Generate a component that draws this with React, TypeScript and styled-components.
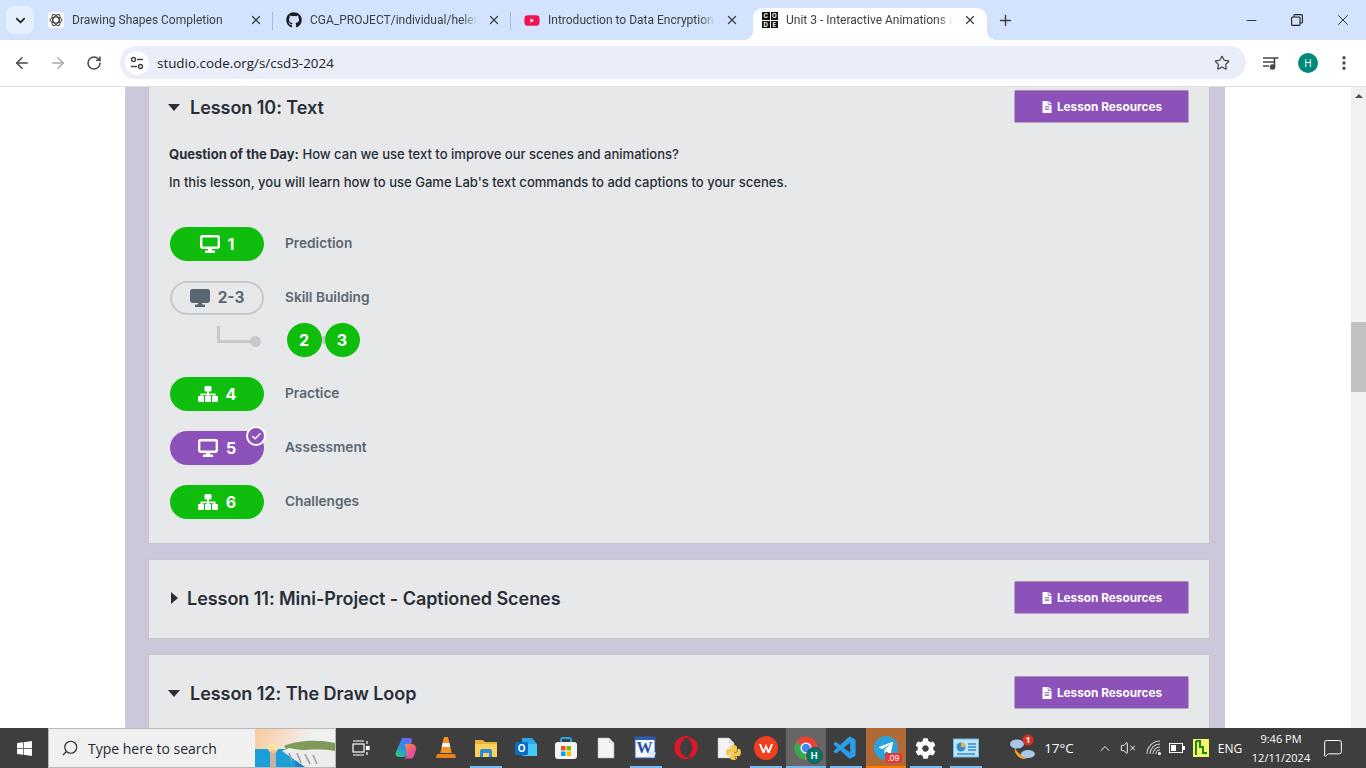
import React from "react";
import styled, { createGlobalStyle } from "styled-components";
import { ArrowLeft, ArrowRight, RotateCw, X, Plus, Minus, Star, ChevronDown, ChevronUp, Search, EllipsisVertical, Check, VolumeX, MessageSquare } from "lucide-react";
import { FaFileAlt, FaGithub, FaYoutube, FaWindows, FaOpera, FaCog, FaTelegramPlane, FaPython } from "react-icons/fa";
import { VscVscode } from "react-icons/vsc";

const GlobalStyle = createGlobalStyle`
  html, body { margin: 0; padding: 0; height: 100%; overflow: hidden; }
  #root { height: 100%; }
  * { box-sizing: border-box; }
  body { font-family: "Inter", "Liberation Sans", sans-serif; }
`;

const Screen = styled.div`
  width: 1366px;
  height: 768px;
  display: flex;
  flex-direction: column;
  overflow: hidden;
  background: #fff;
`;

/* browser chrome */
const TabStrip = styled.div`
  height: 40px;
  background: #d3e3fd;
  display: flex;
  align-items: flex-end;
  padding-left: 6px;
  flex-shrink: 0;
`;

const TabMenu = styled.div`
  width: 28px;
  height: 28px;
  margin: 0 1px 6px 0;
  border-radius: 8px;
  background: #e6effd;
  display: flex;
  align-items: center;
  justify-content: center;
  color: #1f1f1f;
`;

const Tab = styled.div<{ $sep?: boolean }>`
  position: relative;
  width: 238px;
  height: 32px;
  padding: 0 0 8px 13px;
  display: flex;
  align-items: center;
  ${(p) =>
    p.$sep &&
    `&::after {
      content: "";
      position: absolute;
      right: 0;
      top: 4px;
      height: 18px;
      width: 1px;
      background: #a3bbe0;
    }`}
`;

const ActiveTab = styled(Tab)`
  width: 234px;
  margin-left: 4px;
  padding-left: 9px;
  background: #fff;
  border-radius: 10px 10px 0 0;
  &::before,
  &::after {
    content: "";
    position: absolute;
    bottom: 0;
    width: 10px;
    height: 10px;
  }
  &::before {
    left: -10px;
    background: radial-gradient(circle at 0 0, transparent 10px, #fff 10.5px);
  }
  &::after {
    right: -10px;
    background: radial-gradient(circle at 100% 0, transparent 10px, #fff 10.5px);
  }
`;

const TabIcon = styled.div`
  width: 16px;
  height: 16px;
  flex-shrink: 0;
  display: flex;
  align-items: center;
  justify-content: center;
`;

const TabTitle = styled.div`
  margin-left: 8px;
  width: 167px;
  white-space: nowrap;
  overflow: hidden;
  font-family: "Roboto", sans-serif;
  font-size: 12px;
  color: #3c4043;
  -webkit-mask-image: linear-gradient(90deg, #000 91%, transparent);
  mask-image: linear-gradient(90deg, #000 91%, transparent);
`;

const TabClose = styled.div`
  margin-left: 10px;
  display: flex;
  color: #3c4043;
`;

const NewTab = styled.div`
  margin: 0 0 6px 10px;
  height: 28px;
  display: flex;
  align-items: center;
  color: #3c4043;
`;

const WindowButtons = styled.div`
  margin-left: auto;
  display: flex;
  align-self: flex-start;
`;

const WindowButton = styled.div`
  width: 46px;
  height: 40px;
  display: flex;
  align-items: center;
  justify-content: center;
  color: #1f1f1f;
`;

const Toolbar = styled.div`
  height: 47px;
  background: #fff;
  border-bottom: 1px solid #e0e0e0;
  display: flex;
  align-items: center;
  flex-shrink: 0;
  padding: 0 0 1px 4px;
`;

const NavButton = styled.div<{ $off?: boolean }>`
  width: 36px;
  display: flex;
  justify-content: center;
  color: ${(p) => (p.$off ? "#a8abaf" : "#474747")};
`;

const AddressBar = styled.div`
  width: 1126px;
  height: 33px;
  margin-left: 8px;
  border-radius: 17px;
  background: #e9eef8;
  display: flex;
  align-items: center;
  padding: 0 16px 0 5px;
`;

const SiteBadge = styled.div`
  width: 24px;
  height: 24px;
  border-radius: 50%;
  background: #fff;
  display: flex;
  align-items: center;
  justify-content: center;
`;

const Url = styled.div`
  margin-left: 8px;
  flex: 1;
  font-family: "Open Sans", sans-serif;
  font-size: 13.4px;
  color: #202124;
`;

const ToolbarRight = styled.div`
  width: 120px;
  display: flex;
  align-items: center;
  color: #474747;
  padding-left: 16px;
`;

const Avatar = styled.div`
  width: 20px;
  height: 20px;
  margin-left: 18px;
  border-radius: 50%;
  background: #00897b;
  color: #fff;
  font-family: "Open Sans", sans-serif;
  font-size: 10px;
  display: flex;
  align-items: center;
  justify-content: center;
`;

const OverflowDots = styled.div`
  margin-left: 17px;
  display: flex;
`;

const CodeLogo = styled.div`
  width: 16px;
  height: 16px;
  display: grid;
  grid-template-columns: 1fr 1fr;
  gap: 1px;
`;

const CodeLetter = styled.div`
  background: #111;
  color: #fff;
  font-size: 6px;
  line-height: 7.5px;
  font-weight: 700;
  text-align: center;
`;

/* page */
const Viewport = styled.div`
  flex: 1;
  min-height: 0;
  display: flex;
`;

const PageArea = styled.div`
  flex: 1;
  min-width: 0;
  overflow: hidden;
  padding-left: 125px;
`;

const Column = styled.div`
  width: 1100px;
  min-height: 100%;
  background: #cdc7dc;
  padding: 0 15px 0 23px;
  display: flex;
  flex-direction: column;
  gap: 15px;
`;

const Card = styled.section<{ $cut?: boolean }>`
  background: #e7e8ea;
  border: 1px solid #c5c6c9;
  border-top: ${(p) => (p.$cut ? "none" : "1px solid #c5c6c9")};
  padding: ${(p) => (p.$cut ? "3px 20px 24px 20px" : "21px 20px 24px 20px")};
`;

const CardHead = styled.div`
  display: flex;
  align-items: center;
  justify-content: space-between;
`;

const CardTitle = styled.h2<{ $open?: boolean }>`
  margin: 0;
  padding-top: 1px;
  display: flex;
  align-items: center;
  gap: ${(p) => (p.$open ? "10px" : "9px")};
  font-size: 18px;
  font-weight: 600;
  color: #292f36;
  letter-spacing: -0.05px;
`;

const OpenCaret = styled.span`
  width: 0;
  height: 0;
  margin-left: -1px;
  border-left: 6px solid transparent;
  border-right: 6px solid transparent;
  border-top: 7px solid #292f36;
`;

const ClosedCaret = styled.span`
  width: 0;
  height: 0;
  margin-left: 2px;
  border-top: 6px solid transparent;
  border-bottom: 6px solid transparent;
  border-left: 7px solid #292f36;
`;

const ResourceButton = styled.div`
  width: 175px;
  height: 33px;
  background: #8c52ba;
  border: 1px solid #b3a6bf;
  border-top-color: #a094aa;
  border-radius: 2px;
  color: #fff;
  font-size: 11.8px;
  font-weight: 700;
  display: flex;
  align-items: center;
  justify-content: center;
  gap: 4px;
`;

const Paragraph = styled.p`
  margin: 0 0 14px;
  font-size: 13.05px;
  line-height: 14px;
  font-weight: 500;
  color: #292f36;
  b { font-weight: 700; }
`;

const Intro = styled.div`
  margin-top: 24px;
`;

const LevelList = styled.div`
  margin: 38px 0 0 1px;
  display: flex;
  flex-direction: column;
  gap: 20px;
`;

const LevelRow = styled.div`
  display: flex;
  align-items: center;
  gap: 21px;
`;

const Pill = styled.div<{ $variant: "green" | "purple" | "outline" }>`
  position: relative;
  width: 94px;
  height: 34px;
  padding-bottom: 1px;
  border-radius: 17px;
  display: flex;
  align-items: center;
  justify-content: center;
  gap: 8px;
  font-size: ${(p) => (p.$variant === "outline" ? "15.4px" : "16px")};
  font-weight: 700;
  color: ${(p) => (p.$variant === "outline" ? "#5b6770" : "#fff")};
  background: ${(p) =>
    p.$variant === "green" ? "#0fbe0c" : p.$variant === "purple" ? "#8c52ba" : "transparent"};
  border: ${(p) => (p.$variant === "outline" ? "2px solid #c6cace" : "none")};
`;

const DoneBadge = styled.div`
  position: absolute;
  top: -5px;
  right: -2px;
  width: 20px;
  height: 20px;
  border-radius: 50%;
  background: #8c52ba;
  border: 2px solid #fff;
  display: flex;
  align-items: center;
  justify-content: center;
`;

const LevelLabel = styled.div`
  padding-bottom: 2px;
  font-size: 13.7px;
  font-weight: 600;
  color: #5b6770;
`;

const SubGroup = styled.div`
  display: flex;
  flex-direction: column;
  gap: 8px;
`;

const SubRow = styled.div`
  display: flex;
  align-items: center;
  height: 34px;
  margin-left: 47px;
`;

const Connector = styled.div`
  position: relative;
  width: 40px;
  height: 17px;
  margin: -12px 30px 0 0;
  border-left: 3px solid #c6cace;
  border-bottom: 3px solid #c6cace;
  &::after {
    content: "";
    position: absolute;
    right: -4px;
    bottom: -7px;
    width: 11px;
    height: 11px;
    border-radius: 50%;
    background: #c6cace;
  }
`;

const Bubbles = styled.div`
  display: flex;
  align-items: center;
`;

const Bubble = styled.div`
  width: 35px;
  height: 34px;
  padding: 0 1px 1px 0;
  border-radius: 50%;
  background: #0fbe0c;
  color: #fff;
  font-size: 16px;
  font-weight: 700;
  display: flex;
  align-items: center;
  justify-content: center;
`;

const BubbleLink = styled.div`
  width: 3px;
  height: 8px;
  background: #c6cace;
`;

const Scrollbar = styled.div`
  width: 15px;
  background: #f1f1f1;
  display: flex;
  flex-direction: column;
  align-items: center;
  padding-top: 7px;
`;

const ScrollArrow = styled.div`
  width: 0;
  height: 0;
  border-left: 4px solid transparent;
  border-right: 4px solid transparent;
  border-bottom: 4px solid #505050;
`;

const ScrollThumb = styled.div`
  width: 15px;
  height: 70px;
  margin-top: 224px;
  background: #c1c1c1;
`;

/* windows taskbar */
const Taskbar = styled.div`
  height: 40px;
  flex-shrink: 0;
  background: #3e3e3e;
  display: flex;
  align-items: stretch;
`;

const StartButton = styled.div`
  width: 48px;
  display: flex;
  align-items: center;
  justify-content: center;
  color: #fff;
`;

const SearchBox = styled.div`
  position: relative;
  width: 288px;
  margin-right: 5px;
  background: #f0f0f0;
  border: 1px solid #b8b8b8;
  display: flex;
  align-items: center;
  padding-left: 12px;
  gap: 9px;
  font-family: "Open Sans", sans-serif;
  font-size: 14px;
  color: #1f2a33;
  overflow: hidden;
`;

const SearchGlass = styled.span`
  display: flex;
  transform: scaleX(-1);
`;

const SearchArt = styled.svg`
  position: absolute;
  right: 0;
  top: 0;
`;

const Slot = styled.div<{ $state?: "open" | "active" | "alert" }>`
  position: relative;
  width: 40px;
  display: flex;
  align-items: center;
  justify-content: center;
  color: #fff;
  background: ${(p) =>
    p.$state === "active" ? "#666" : p.$state === "alert" ? "#b06a35" : "transparent"};
  &:first-child {
    margin-right: 4.5px;
  }
  ${(p) =>
    p.$state &&
    `&::after {
      content: "";
      position: absolute;
      bottom: 0;
      height: 2px;
      left: ${p.$state === "open" ? "4px" : "0"};
      right: ${p.$state === "open" ? "4px" : "0"};
      background: ${p.$state === "alert" ? "#ff7a00" : "#76b9ed"};
    }`}
`;

const Tray = styled.div`
  margin-left: auto;
  padding-right: 15px;
  display: flex;
  align-items: center;
  color: #fff;
  font-family: "Open Sans", sans-serif;
  font-size: 13.5px;
`;

const TrayItem = styled.div<{ $w: number; $ml?: number }>`
  width: ${(p) => p.$w}px;
  margin-left: ${(p) => p.$ml ?? 0}px;
  display: flex;
  align-items: center;
  justify-content: center;
`;

const LangItem = styled(TrayItem)`
  font-size: 12px;
`;

const Clock = styled.div`
  width: 68px;
  text-align: center;
  font-size: 11px;
  line-height: 19px;
`;

const RedBadge = styled.span`
  position: absolute;
  right: -4px;
  bottom: -3px;
  background: #e53935;
  color: #fff;
  font-size: 8px;
  line-height: 10px;
  padding: 0 2px;
  border-radius: 2px;
`;

const IconWrap = styled.div`
  position: relative;
  display: flex;
`;

const ProfileDot = styled.span`
  position: absolute;
  right: -5px;
  bottom: -4px;
  width: 17px;
  height: 17px;
  border-radius: 50%;
  background: #00796b;
  border: 1px solid #444;
  color: #fff;
  font-size: 9px;
  font-weight: 700;
  display: flex;
  align-items: center;
  justify-content: center;
`;

const PyOverlay = styled.span`
  position: absolute;
  right: -7px;
  bottom: -2px;
  display: flex;
`;

const TelegramDisc = styled.div`
  width: 24px;
  height: 24px;
  border-radius: 50%;
  background: #2aa3dc;
  display: flex;
  align-items: center;
  justify-content: center;
`;

const TaskSlots = styled.div`
  display: flex;
`;

/* small drawings */
const GptIcon = () => (
  <svg width="16" height="16" viewBox="0 0 16 16">
    <rect width="16" height="16" rx="3" fill="#fff" />
    {[0, 60, 120].map((a) => (
      <ellipse key={a} cx="8" cy="8" rx="6" ry="3" fill="none" stroke="#333" strokeWidth="1" transform={`rotate(${a} 8 8)`} />
    ))}
  </svg>
);

const TuneIcon = () => (
  <svg width="14" height="14" viewBox="0 0 14 14" fill="none" stroke="#3c4043" strokeWidth="1.4">
    <circle cx="3.5" cy="3.5" r="2" />
    <path d="M7 3.5h6" />
    <circle cx="10.5" cy="10.5" r="2" />
    <path d="M1 10.5h6" />
  </svg>
);

const QueueIcon = () => (
  <svg width="18" height="16" viewBox="0 0 18 16" fill="none" stroke="#474747" strokeWidth="1.6">
    <path d="M1 3h11M1 7h11M1 11h6" />
    <path d="M12.5 12V3h4" />
    <circle cx="10.5" cy="12" r="2" fill="#474747" />
  </svg>
);

const RestoreIcon = () => (
  <svg width="12" height="12" viewBox="0 0 12 12" fill="none" stroke="#1f1f1f" strokeWidth="1.1">
    <rect x="0.6" y="3" width="8.400" height="8.400" rx="1" />
    <path d="M3 3V1.600a1 1 0 0 1 1-1h6.400a1 1 0 0 1 1 1V8a1 1 0 0 1-1 1H9" />
  </svg>
);

const DeskIcon = ({ solid }: { solid?: boolean }) => (
  <svg width="20" height="18" viewBox="0 0 20 18">
    <rect x="1.200" y="1.200" width="17.600" height="11.600" rx="1.200" fill={solid ? "currentColor" : "none"} stroke="currentColor" strokeWidth="2.400" />
    <path d="M8 14h4v2H8z M5 15.500h10V18H5z" fill="currentColor" />
  </svg>
);

const SitemapIcon = () => (
  <svg width="20" height="16" viewBox="0 0 20 16" fill="currentColor">
    <rect x="6.500" y="0" width="7" height="5.500" rx="1" />
    <rect x="0" y="10" width="6" height="6" rx="1" />
    <rect x="7" y="10" width="6" height="6" rx="1" />
    <rect x="14" y="10" width="6" height="6" rx="1" />
    <path d="M9 5h2v2.500h6.500V10h-2V9.200h-4.500V10H9V9.200H4.500V10h-2V7.500H9z" />
  </svg>
);

const TaskViewIcon = () => (
  <svg width="18" height="18" viewBox="0 0 18 18" fill="none" stroke="#fff" strokeWidth="1.200">
    <rect x="1" y="5" width="11" height="8" />
    <path d="M1 2h11M1 16h11M15 2v3M15 13v3" />
    <rect x="14.500" y="7.500" width="2.500" height="3" fill="#fff" />
  </svg>
);

const WifiIcon = () => (
  <svg width="16" height="16" viewBox="0 0 16 16" fill="none" stroke="#cfcfcf" strokeWidth="1.100">
    <path d="M1 14A13 13 0 0 1 14 1M4 14A10 10 0 0 1 14 4M7 14a7 7 0 0 1 7-7M10 14a4 4 0 0 1 4-4" />
    <circle cx="13.500" cy="13.500" r="1.500" fill="#fff" stroke="none" />
  </svg>
);

const BatteryIcon = () => (
  <svg width="16" height="10" viewBox="0 0 16 10">
    <rect x="0.500" y="0.500" width="13" height="9" fill="none" stroke="#fff" />
    <rect x="2" y="2" width="5" height="6" fill="#fff" />
    <rect x="14" y="3" width="2" height="4" fill="#fff" />
  </svg>
);

const CopilotIcon = () => (
  <svg width="24" height="24" viewBox="0 0 24 24">
    <defs>
      <linearGradient id="cpA" x1="0" y1="1" x2="1" y2="0">
        <stop offset="0" stopColor="#2fd36b" />
        <stop offset="0.5" stopColor="#2a8cf0" />
        <stop offset="1" stopColor="#8a5cf0" />
      </linearGradient>
      <linearGradient id="cpB" x1="0" y1="0" x2="1" y2="1">
        <stop offset="0" stopColor="#f0a020" />
        <stop offset="0.6" stopColor="#f0508a" />
        <stop offset="1" stopColor="#c050e0" />
      </linearGradient>
    </defs>
    <path d="M8 2h7c2 0 3 1 3 3l-4 13c-.6 2-2 3-4 3H5c-3 0-4-3-3-5z" fill="url(#cpA)" />
    <path d="M11 8h7c3 0 5 3 4 6l-2 6c-.6 2-2 2.500-4 2.500h-7c2 0 3-1 4-3z" fill="url(#cpB)" />
  </svg>
);

const VlcIcon = () => (
  <svg width="22" height="24" viewBox="0 0 22 24">
    <path d="M9 1h4l1.500 6h-7z" fill="#f7931e" />
    <path d="M7.500 7h7l.8 4H6.700z" fill="#f4f4f4" />
    <path d="M6.700 11h8.600l1.500 6H5.200z" fill="#f7931e" />
    <path d="M2 18h18l1 4H1z" fill="#e8801a" />
  </svg>
);

const FolderIcon = () => (
  <svg width="24" height="22" viewBox="0 0 24 22">
    <path d="M1 3h8l2 2h12v3H1z" fill="#e8b33c" />
    <path d="M1 7h22v13H1z" fill="#fbd25c" />
    <path d="M6 20v-6a2 2 0 0 1 2-2h8a2 2 0 0 1 2 2v6h-3v-4H9v4z" fill="#2a8fd8" />
  </svg>
);

const OutlookIcon = () => (
  <svg width="24" height="24" viewBox="0 0 24 24">
    <path d="M8 2h10l5 6v12H8z" fill="#28a8ea" />
    <path d="M12 8h11v12H12z" fill="#50d9ff" opacity=".7" />
    <rect x="1" y="6" width="13" height="13" rx="1.500" fill="#0a6cc4" />
    <text x="7.500" y="16" fontSize="10" fontWeight="700" fill="#fff" textAnchor="middle">O</text>
  </svg>
);

const StoreIcon = () => (
  <svg width="24" height="24" viewBox="0 0 24 24">
    <path d="M7 7V4a2 2 0 0 1 2-2h6a2 2 0 0 1 2 2v3" fill="none" stroke="#2aa5e0" strokeWidth="2" />
    <rect x="1" y="6" width="22" height="17" rx="3" fill="#f4f4f4" />
    <rect x="7" y="10" width="4.500" height="4.500" fill="#f25022" />
    <rect x="12.500" y="10" width="4.500" height="4.500" fill="#7fba00" />
    <rect x="7" y="15.500" width="4.500" height="4.500" fill="#00a4ef" />
    <rect x="12.500" y="15.500" width="4.500" height="4.500" fill="#ffb900" />
  </svg>
);

const BlankFileIcon = () => (
  <svg width="18" height="22" viewBox="0 0 18 22">
    <path d="M1 1h11l5 5v15H1z" fill="#f4f4f4" stroke="#aaa" strokeWidth=".6" />
    <path d="M12 1v5h5" fill="#ddd" />
  </svg>
);

const WordIcon = () => (
  <svg width="24" height="24" viewBox="0 0 24 24">
    <rect x="1" y="1" width="20" height="21" fill="#f5f7fb" stroke="#2b5eb0" />
    <rect x="1" y="1" width="20" height="3" fill="#2b5eb0" />
    <text x="10.500" y="17" fontSize="16" fontWeight="700" fontFamily="Liberation Serif, serif" fill="#1e4fa6" textAnchor="middle">W</text>
    <path d="M17 14l5 3-3 5-5-2z" fill="#dfe7f5" />
  </svg>
);

const WpsIcon = () => (
  <svg width="24" height="24" viewBox="0 0 24 24">
    <circle cx="12" cy="12" r="12" fill="#f0401e" />
    <path d="M5 8l3.500 9h2L12 12l1.500 5h2L19 8h-2l-2.500 6L12 8l-2.500 6L7 8z" fill="#fff" />
  </svg>
);

const PyFileIcon = () => (
  <IconWrap>
    <BlankFileIcon />
    <PyOverlay>
      <FaPython size={17} color="#f2c94c" />
    </PyOverlay>
  </IconWrap>
);

const ChromeIcon = () => (
  <svg width="24" height="24" viewBox="0 0 24 24">
    <circle cx="12" cy="12" r="11.500" fill="#ea4335" />
    <path d="M12 12L2 18A11.500 11.500 0 0 1 2 6z" fill="#34a853" />
    <path d="M12 12L2 18a11.500 11.500 0 0 0 10 5.500A11.500 11.500 0 0 0 22 18z" fill="#34a853" />
    <path d="M12 12h11.500a11.500 11.500 0 0 1-12 11.500z" fill="#fbbc04" />
    <circle cx="12" cy="12" r="5.500" fill="#fff" />
    <circle cx="12" cy="12" r="4.300" fill="#4285f4" />
  </svg>
);

const ControlPanelIcon = () => (
  <svg width="26" height="20" viewBox="0 0 26 20">
    <rect x="0.500" y="1" width="25" height="18" fill="#bfe3f7" stroke="#6fb6e0" />
    <circle cx="8" cy="9" r="4.500" fill="#2d8fd5" />
    <path d="M8 9V4.500A4.500 4.500 0 0 1 12.500 9z" fill="#f2b233" />
    <path d="M15 6h8M15 9h8M15 12h8M4 16h18" stroke="#2d8fd5" strokeWidth="1.400" />
  </svg>
);

const WeatherIcon = () => (
  <svg width="28" height="28" viewBox="0 0 28 28">
    <path d="M6 12a10 10 0 0 0 15 11c-5 2-13 1-15-11z" fill="#f59a23" />
    <path d="M6 14c2 5 7 8 13 8l-4 3c-5 0-9-5-9-11z" fill="#f59a23" />
    <ellipse cx="8" cy="10" rx="7" ry="4.500" fill="#a8c8ea" />
    <ellipse cx="19" cy="20" rx="7" ry="4" fill="#a8c8ea" />
    <circle cx="19" cy="6" r="5.500" fill="#d93025" />
    <text x="19" y="9" fontSize="8" fontWeight="700" fill="#fff" textAnchor="middle">1</text>
  </svg>
);

const StairIcon = () => (
  <svg width="16" height="18" viewBox="0 0 16 18">
    <rect width="16" height="18" fill="#f5f56a" />
    <path d="M3 2h4v6h3v6h4M3 2v14" fill="none" stroke="#158a15" strokeWidth="2" />
  </svg>
);

const Landscape = () => (
  <SearchArt width="80" height="38" viewBox="0 0 80 38">
    <defs>
      <linearGradient id="sky" x1="0" y1="0" x2="1" y2="0.300">
        <stop offset="0" stopColor="#f9c79a" />
        <stop offset="0.700" stopColor="#f0f0f0" />
      </linearGradient>
    </defs>
    <rect width="80" height="38" fill="url(#sky)" />
    <path d="M0 20h40v18H0z" fill="#1c9fd8" />
    <path d="M40 30h20v8H40z" fill="#1c7fd0" />
    <circle cx="18" cy="19" r="5" fill="#ffe39a" />
    <rect x="15" y="21" width="6" height="17" fill="#f5b59a" opacity=".8" />
    <path d="M29 17c12-5 32-7 51-3v8c-18-3-36-1-46 2z" fill="#7f9a5a" />
    <path d="M27 22l7-3c14 3 30 3 46 3v16H50z" fill="#ececec" />
    <path d="M34 24l3 8M42 24l4 10M50 25l5 10M58 26l4 9" stroke="#9a9a9a" strokeWidth="1.500" />
  </SearchArt>
);

const levels = [
  { kind: "green", icon: "desk", num: "1", label: "Prediction" },
  { kind: "outline", icon: "desk", num: "2-3", label: "Skill Building", bubbles: ["2", "3"] },
  { kind: "green", icon: "map", num: "4", label: "Practice" },
  { kind: "purple", icon: "desk", num: "5", label: "Assessment", done: true },
  { kind: "green", icon: "map", num: "6", label: "Challenges" },
] as const;

const tabs = [
  { title: "Drawing Shapes Completion", icon: <GptIcon />, sep: true },
  { title: "CGA_PROJECT/individual/helen/", icon: <FaGithub size={16} color="#1b1f23" />, sep: true },
  { title: "Introduction to Data Encryption", icon: <FaYoutube size={17} color="#f0134d" />, sep: false },
];

const ResourcesBtn = () => (
  <ResourceButton>
    <FaFileAlt size={12} />
    Lesson Resources
  </ResourceButton>
);

const slots: { icon: React.ReactNode; state?: "open" | "active" | "alert" }[] = [
  { icon: <TaskViewIcon /> },
  { icon: <CopilotIcon /> },
  { icon: <VlcIcon /> },
  { icon: <FolderIcon />, state: "open" },
  { icon: <OutlookIcon /> },
  { icon: <StoreIcon /> },
  { icon: <BlankFileIcon /> },
  { icon: <WordIcon />, state: "open" },
  { icon: <FaOpera size={24} color="#e0162b" /> },
  { icon: <PyFileIcon /> },
  { icon: <WpsIcon />, state: "open" },
  { icon: <IconWrap><ChromeIcon /><ProfileDot>H</ProfileDot></IconWrap>, state: "active" },
  { icon: <VscVscode size={27} color="#2a9fe8" />, state: "open" },
  {
    icon: (
      <IconWrap>
        <TelegramDisc><FaTelegramPlane size={16} color="#fff" /></TelegramDisc>
        <RedBadge>.09</RedBadge>
      </IconWrap>
    ),
    state: "alert",
  },
  { icon: <FaCog size={21} />, state: "open" },
  { icon: <ControlPanelIcon />, state: "open" },
];

export default function App() {
  return (
    <Screen>
      <GlobalStyle />
      <TabStrip>
        <TabMenu><ChevronDown size={15} strokeWidth={2.6} /></TabMenu>
        {tabs.map((t) => (
          <Tab key={t.title} $sep={t.sep}>
            <TabIcon>{t.icon}</TabIcon>
            <TabTitle>{t.title}</TabTitle>
            <TabClose><X size={14} strokeWidth={2.2} /></TabClose>
          </Tab>
        ))}
        <ActiveTab>
          <TabIcon>
            <CodeLogo>{["C", "O", "D", "E"].map((c) => <CodeLetter key={c}>{c}</CodeLetter>)}</CodeLogo>
          </TabIcon>
          <TabTitle>Unit 3 - Interactive Animations a</TabTitle>
          <TabClose><X size={14} strokeWidth={2.2} /></TabClose>
        </ActiveTab>
        <NewTab><Plus size={17} strokeWidth={2} /></NewTab>
        <WindowButtons>
          <WindowButton><Minus size={15} strokeWidth={1.4} /></WindowButton>
          <WindowButton><RestoreIcon /></WindowButton>
          <WindowButton><X size={18} strokeWidth={1.2} /></WindowButton>
        </WindowButtons>
      </TabStrip>
      <Toolbar>
        <NavButton><ArrowLeft size={18} /></NavButton>
        <NavButton $off><ArrowRight size={18} /></NavButton>
        <NavButton><RotateCw size={16} strokeWidth={2.2} /></NavButton>
        <AddressBar>
          <SiteBadge><TuneIcon /></SiteBadge>
          <Url>studio.code.org/s/csd3-2024</Url>
          <Star size={16} color="#474747" strokeWidth={1.8} />
        </AddressBar>
        <ToolbarRight>
          <QueueIcon />
          <Avatar>H</Avatar>
          <OverflowDots><EllipsisVertical size={18} strokeWidth={2.4} /></OverflowDots>
        </ToolbarRight>
      </Toolbar>

      <Viewport>
        <PageArea>
          <Column>
            <Card $cut>
              <CardHead>
                <CardTitle $open><OpenCaret />Lesson 10: Text</CardTitle>
                <ResourcesBtn />
              </CardHead>
              <Intro>
                <Paragraph><b>Question of the Day:</b> How can we use text to improve our scenes and animations?</Paragraph>
                <Paragraph>In this lesson, you will learn how to use Game Lab's text commands to add captions to your scenes.</Paragraph>
              </Intro>
              <LevelList>
                {levels.map((l) => {
                  const row = (
                    <LevelRow key={l.num}>
                      <Pill $variant={l.kind}>
                        {l.icon === "desk" ? <DeskIcon solid={l.kind === "outline"} /> : <SitemapIcon />}
                        {l.num}
                        {"done" in l && (
                          <DoneBadge><Check size={11} color="#fff" strokeWidth={3} /></DoneBadge>
                        )}
                      </Pill>
                      <LevelLabel>{l.label}</LevelLabel>
                    </LevelRow>
                  );
                  if (!("bubbles" in l)) return row;
                  return (
                    <SubGroup key={l.num}>
                      {row}
                      <SubRow>
                        <Connector />
                        <Bubbles>
                          <Bubble>{l.bubbles[0]}</Bubble>
                          <BubbleLink />
                          <Bubble>{l.bubbles[1]}</Bubble>
                        </Bubbles>
                      </SubRow>
                    </SubGroup>
                  );
                })}
              </LevelList>
            </Card>
            <Card>
              <CardHead>
                <CardTitle><ClosedCaret />Lesson 11: Mini-Project - Captioned Scenes</CardTitle>
                <ResourcesBtn />
              </CardHead>
            </Card>
            <Card>
              <CardHead>
                <CardTitle $open><OpenCaret />Lesson 12: The Draw Loop</CardTitle>
                <ResourcesBtn />
              </CardHead>
            </Card>
          </Column>
        </PageArea>
        <Scrollbar>
          <ScrollArrow />
          <ScrollThumb />
        </Scrollbar>
      </Viewport>

      <Taskbar>
        <StartButton><FaWindows size={17} /></StartButton>
        <SearchBox>
          <SearchGlass><Search size={18} strokeWidth={1.5} /></SearchGlass>
          Type here to search
          <Landscape />
        </SearchBox>
        <TaskSlots>
          {slots.map((s, i) => (
            <Slot key={i} $state={s.state}>{s.icon}</Slot>
          ))}
        </TaskSlots>
        <Tray>
          <TrayItem $w={28}><WeatherIcon /></TrayItem>
          <TrayItem $w={44}>17°C</TrayItem>
          <TrayItem $w={16} $ml={16}><ChevronUp size={17} strokeWidth={1.4} /></TrayItem>
          <TrayItem $w={30}><VolumeX size={16} strokeWidth={1.4} /></TrayItem>
          <TrayItem $w={22}><WifiIcon /></TrayItem>
          <TrayItem $w={24}><BatteryIcon /></TrayItem>
          <TrayItem $w={24}><StairIcon /></TrayItem>
          <LangItem $w={34}>ENG</LangItem>
          <Clock>9:46 PM<br />12/11/2024</Clock>
          <TrayItem $w={36}><MessageSquare size={20} strokeWidth={1.2} /></TrayItem>
        </Tray>
      </Taskbar>
    </Screen>
  );
}
